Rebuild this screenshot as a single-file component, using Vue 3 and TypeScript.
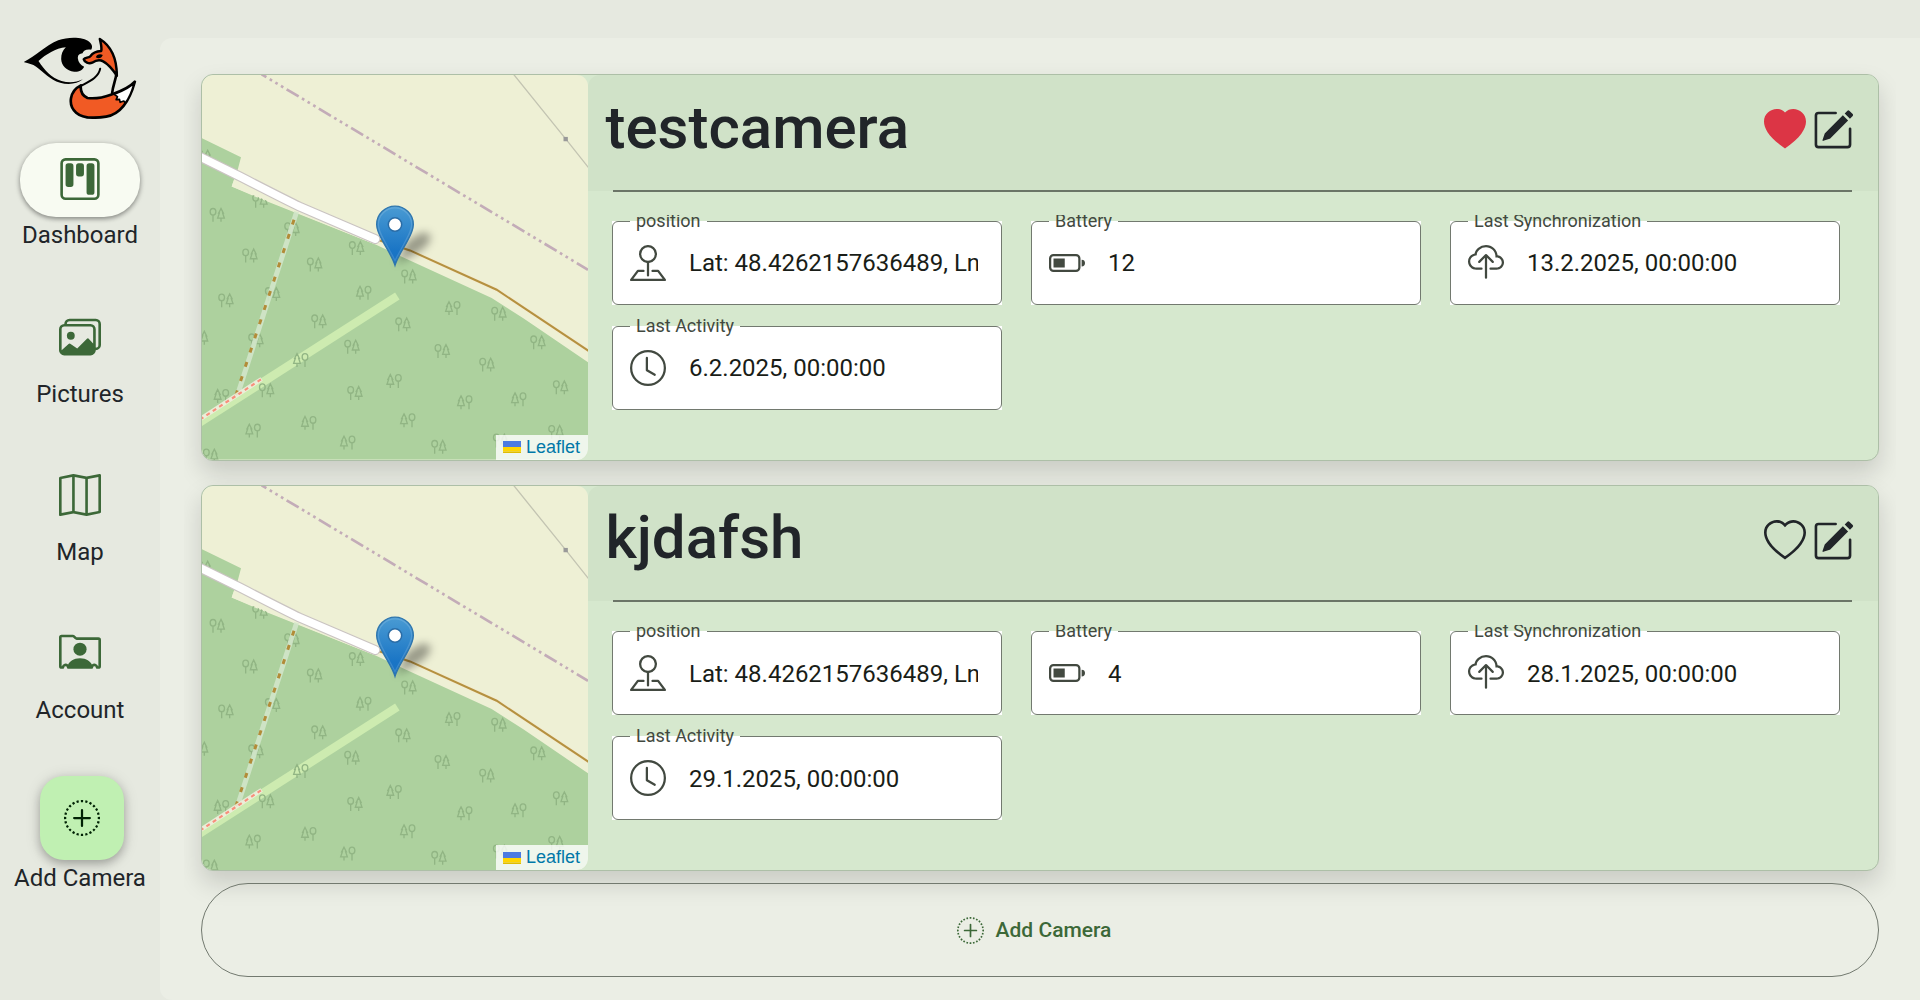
<script setup lang="ts">
interface Field {
  label: string
  icon: string
  value: string
}
interface Camera {
  name: string
  favorite: boolean
  fields: Field[]
}
interface Tree {
  x: number
  y: number
  flip?: boolean
}

const icons: Record<string, string[]> = {
  kanban: [
    'M13.5 1a1 1 0 0 1 1 1v12a1 1 0 0 1-1 1h-11a1 1 0 0 1-1-1V2a1 1 0 0 1 1-1zm-11-1a2 2 0 0 0-2 2v12a2 2 0 0 0 2 2h11a2 2 0 0 0 2-2V2a2 2 0 0 0-2-2z',
    'M6.5 3a1 1 0 0 1 1-1h1a1 1 0 0 1 1 1v3a1 1 0 0 1-1 1h-1a1 1 0 0 1-1-1zm-4 0a1 1 0 0 1 1-1h1a1 1 0 0 1 1 1v7a1 1 0 0 1-1 1h-1a1 1 0 0 1-1-1zm8 0a1 1 0 0 1 1-1h1a1 1 0 0 1 1 1v10a1 1 0 0 1-1 1h-1a1 1 0 0 1-1-1z',
  ],
  images: [
    'M4.502 9a1.5 1.5 0 1 0 0-3 1.5 1.5 0 0 0 0 3',
    'M14.002 13a2 2 0 0 1-2 2h-10a2 2 0 0 1-2-2V5A2 2 0 0 1 2 3a2 2 0 0 1 2-2h10a2 2 0 0 1 2 2v8a2 2 0 0 1-1.998 2M14 2H4a1 1 0 0 0-1 1h9.002a2 2 0 0 1 2 2v7A1 1 0 0 0 15 11V3a1 1 0 0 0-1-1M2.002 4a1 1 0 0 0-1 1v8l2.646-2.354a.5.5 0 0 1 .63-.062l2.66 1.773 3.71-3.71a.5.5 0 0 1 .577-.094l1.777 1.947V5a1 1 0 0 0-1-1z',
  ],
  map: [
    'M15.817.113A.5.5 0 0 1 16 .5v14a.5.5 0 0 1-.402.49l-5 1a.5.5 0 0 1-.196 0L5.5 15.01l-4.902.98A.5.5 0 0 1 0 15.5v-14a.5.5 0 0 1 .402-.49l5-1a.5.5 0 0 1 .196 0L10.5.99l4.902-.98a.5.5 0 0 1 .415.103M10 1.91l-4-.8v12.98l4 .8zm1 12.98 4-.8V1.11l-4 .8zm-6-.8V1.11l-4 .8v12.98z',
  ],
  rolodex: [
    'M8 9.05a2.5 2.5 0 1 0 0-5 2.5 2.5 0 0 0 0 5',
    'M1 1a1 1 0 0 0-1 1v11a1 1 0 0 0 1 1h.5a.5.5 0 0 0 .5-.5.5.5 0 0 1 1 0 .5.5 0 0 0 .5.5h9a.5.5 0 0 0 .5-.5.5.5 0 0 1 1 0 .5.5 0 0 0 .5.5h.5a1 1 0 0 0 1-1V3a1 1 0 0 0-1-1H6.707L6 1.293A1 1 0 0 0 5.293 1zm0 1h4.293L6 2.707A1 1 0 0 0 6.707 3H15v10h-.085a1.5 1.5 0 0 0-2.4-.63C11.885 11.223 10.554 10 8 10c-2.555 0-3.886 1.224-4.514 2.37a1.5 1.5 0 0 0-2.4.63H1z',
  ],
  plus: [
    'M8 0q-.264 0-.523.017l.064.998a7 7 0 0 1 .918 0l.064-.998A8 8 0 0 0 8 0M6.44.152q-.52.104-1.012.27l.321.948q.43-.147.884-.237L6.44.153zm4.132.271a8 8 0 0 0-1.011-.27l-.194.98q.453.09.884.237zm1.873.925a8 8 0 0 0-.906-.524l-.443.896q.413.205.793.459zM4.46.824q-.471.233-.905.524l.556.83a7 7 0 0 1 .793-.458zM2.725 1.985q-.394.346-.74.74l.752.66q.303-.345.648-.648zm11.29.74a8 8 0 0 0-.74-.74l-.66.752q.346.303.648.648zm1.161 1.735a8 8 0 0 0-.524-.905l-.83.556q.254.38.458.793l.896-.443zM1.348 3.555q-.292.433-.524.906l.896.443q.205-.413.459-.793zM.423 5.428a8 8 0 0 0-.27 1.011l.98.194q.09-.453.237-.884zM15.848 6.44a8 8 0 0 0-.27-1.012l-.948.321q.147.43.237.884zM.017 7.477a8 8 0 0 0 0 1.046l.998-.064a7 7 0 0 1 0-.918zM16 8a8 8 0 0 0-.017-.523l-.998.064a7 7 0 0 1 0 .918l.998.064A8 8 0 0 0 16 8M.152 9.56q.104.52.27 1.012l.948-.321a7 7 0 0 1-.237-.884l-.98.194zm15.425 1.012q.168-.493.27-1.011l-.98-.194q-.09.453-.237.884zM.824 11.54a8 8 0 0 0 .524.905l.83-.556a7 7 0 0 1-.458-.793zm13.828.905q.292-.434.524-.906l-.896-.443q-.205.413-.459.793zm-12.667.83q.346.394.74.74l.66-.752a7 7 0 0 1-.648-.648zm11.29.74q.394-.346.74-.74l-.752-.66q-.302.346-.648.648zm-1.735 1.161q.471-.233.905-.524l-.556-.83a7 7 0 0 1-.793.458zm-7.985-.524q.434.292.906.524l.443-.896a7 7 0 0 1-.793-.459zm1.873.925q.493.168 1.011.27l.194-.98a7 7 0 0 1-.884-.237zm4.132.271a8 8 0 0 0 1.012-.27l-.321-.948a7 7 0 0 1-.884.237l.194.98zm-2.083.135a8 8 0 0 0 1.046 0l-.064-.998a7 7 0 0 1-.918 0zM8.5 4.5a.5.5 0 0 0-1 0v3h-3a.5.5 0 0 0 0 1h3v3a.5.5 0 0 0 1 0v-3h3a.5.5 0 0 0 0-1h-3z',
  ],
  heart: [
    'm8 2.748-.717-.737C5.6.281 2.514.878 1.4 3.053c-.523 1.023-.641 2.5.314 4.385.92 1.815 2.834 3.989 6.286 6.357 3.452-2.368 5.365-4.542 6.286-6.357.955-1.886.838-3.362.314-4.385C13.486.878 10.4.28 8.717 2.01zM8 15C-7.333 4.868 3.279-3.04 7.824 1.143q.09.083.176.171a3 3 0 0 1 .176-.17C12.72-3.042 23.333 4.867 8 15',
  ],
  heartFill: ['M8 1.314C12.438-3.248 23.534 4.735 8 15-7.534 4.736 3.562-3.248 8 1.314'],
  edit: [
    'M15.502 1.94a.5.5 0 0 1 0 .706L14.459 3.69l-2-2L13.502.646a.5.5 0 0 1 .707 0l1.293 1.293zm-1.75 2.456-2-2L4.939 9.21a.5.5 0 0 0-.121.196l-.805 2.414a.25.25 0 0 0 .316.316l2.414-.805a.5.5 0 0 0 .196-.12l6.813-6.814z',
    'M1 13.5A1.5 1.5 0 0 0 2.5 15h11a1.5 1.5 0 0 0 1.5-1.5v-6a.5.5 0 0 0-1 0v6a.5.5 0 0 1-.5.5h-11a.5.5 0 0 1-.5-.5v-11a.5.5 0 0 1 .5-.5H9a.5.5 0 0 0 0-1H2.5A1.5 1.5 0 0 0 1 2.5z',
  ],
  pin: [
    'M3.1 11.2a.5.5 0 0 1 .4-.2H6a.5.5 0 0 1 0 1H3.75L1.5 15h13l-2.25-3H10a.5.5 0 0 1 0-1h2.5a.5.5 0 0 1 .4.2l3 4a.5.5 0 0 1-.4.8H.5a.5.5 0 0 1-.4-.8z',
    'M8 1a3 3 0 1 0 0 6 3 3 0 0 0 0-6M4 4a4 4 0 1 1 4.5 3.969V13.5a.5.5 0 0 1-1 0V7.97A4 4 0 0 1 4 3.999z',
  ],
  battery: [
    'M2 6h5v4H2z',
    'M2 4a2 2 0 0 0-2 2v4a2 2 0 0 0 2 2h10a2 2 0 0 0 2-2V6a2 2 0 0 0-2-2zm10 1a1 1 0 0 1 1 1v4a1 1 0 0 1-1 1H2a1 1 0 0 1-1-1V6a1 1 0 0 1 1-1zm4 3a1.5 1.5 0 0 1-1.5 1.5v-3A1.5 1.5 0 0 1 16 8',
  ],
  cloud: [
    'M4.406 1.342A5.53 5.53 0 0 1 8 0c2.69 0 4.923 2 5.166 4.579C14.758 4.804 16 6.137 16 7.773 16 9.569 14.502 11 12.687 11H10a.5.5 0 0 1 0-1h2.688C13.979 10 15 8.988 15 7.773c0-1.216-1.02-2.228-2.313-2.228h-.5v-.5C12.188 2.825 10.328 1 8 1a4.53 4.53 0 0 0-2.941 1.1c-.757.652-1.153 1.438-1.153 2.055v.448l-.445.049C2.064 4.805 1 5.952 1 7.318 1 8.785 2.23 10 3.781 10H6a.5.5 0 0 1 0 1H3.781C1.708 11 0 9.366 0 7.318c0-1.763 1.266-3.223 2.942-3.593.143-.863.698-1.723 1.464-2.383',
    'M7.646 4.146a.5.5 0 0 1 .708 0l3 3a.5.5 0 0 1-.708.708L8.5 5.707V14.5a.5.5 0 0 1-1 0V5.707L5.354 7.854a.5.5 0 1 1-.708-.708z',
  ],
  clock: [
    'M8 3.5a.5.5 0 0 0-1 0V9a.5.5 0 0 0 .252.434l3.5 2a.5.5 0 0 0 .496-.868L8 8.71z',
    'M8 16A8 8 0 1 0 8 0a8 8 0 0 0 0 16m7-8A7 7 0 1 1 1 8a7 7 0 0 1 14 0',
  ],
}

const nav = [
  { label: 'Dashboard', icon: 'kanban', active: true },
  { label: 'Pictures', icon: 'images', active: false },
  { label: 'Map', icon: 'map', active: false },
  { label: 'Account', icon: 'rolodex', active: false },
]

const position = 'Lat: 48.4262157636489, Lng: 9.9'

const makeFields = (battery: string, sync: string, activity: string): Field[] => [
  { label: 'position', icon: 'pin', value: position },
  { label: 'Battery', icon: 'battery', value: battery },
  { label: 'Last Synchronization', icon: 'cloud', value: sync },
  { label: 'Last Activity', icon: 'clock', value: activity },
]

const cameras: Camera[] = [
  { name: 'testcamera', favorite: true, fields: makeFields('12', '13.2.2025, 00:00:00', '6.2.2025, 00:00:00') },
  { name: 'kjdafsh', favorite: false, fields: makeFields('4', '28.1.2025, 00:00:00', '29.1.2025, 00:00:00') },
]

const trees: Tree[] = [
  { x: 42, y: 290 }, { x: 82, y: 465 }, { x: 210, y: 423 }, { x: 306, y: 508 }, { x: 180, y: 587 },
  { x: 374, y: 614 }, { x: 500, y: 565 }, { x: 657, y: 650 }, { x: 521, y: 699, flip: true },
  { x: 788, y: 745, flip: true }, { x: 927, y: 762 }, { x: 1044, y: 848 }, { x: 108, y: 722 },
  { x: 248, y: 703 }, { x: 387, y: 785 }, { x: 639, y: 794 }, { x: 198, y: 842 }, { x: 486, y: 861 },
  { x: 757, y: 874 }, { x: 891, y: 915 }, { x: 332, y: 901, flip: true }, { x: 230, y: 992 },
  { x: 94, y: 1009, flip: true }, { x: 612, y: 964, flip: true }, { x: 495, y: 1000 },
  { x: 824, y: 1028, flip: true }, { x: 986, y: 1019, flip: true }, { x: 1112, y: 983 },
  { x: 653, y: 1082, flip: true }, { x: 356, y: 1090, flip: true }, { x: 189, y: 1113, flip: true },
  { x: 473, y: 1149, flip: true }, { x: 747, y: 1162 }, { x: 1098, y: 1117 }, { x: 62, y: 1188 },
  { x: 32, y: 834 }, { x: 932, y: 1143 },
]
</script>

<template>
  <div class="shell">
    <nav class="sidebar">
      <svg class="logo" viewBox="72 52 338 246" aria-hidden="true">
        <path d="M72 126C104 111 134 79 174 62C206 50 250 52 267 66C276 74 278 82 273 90C258 88 250 92 247 101C238 102 232 106 233 116C234 128 241 136 252 141C248 151 236 157 222 156C199 154 184 138 183 118C183 104 187 92 197 83C166 86 138 104 115 124C132 150 152 174 184 184C206 190 228 189 248 179C232 193 204 196 180 189C148 180 132 158 108 141C98 134 84 131 72 128Z" fill="#000" />
        <path d="M299 58C328 76 350 112 350 168C338 150 326 134 309 125C297 118 285 123 276 129C266 134 253 127 251 119C256 112 266 116 272 108C279 97 290 95 303 94C306 84 302 72 299 58Z" fill="#f15a24" stroke="#000" stroke-width="7.500" stroke-linejoin="round" />
        <path d="M287 113C289 104 300 102 308 106C305 115 295 119 287 113Z" fill="#000" />
        <path d="M242 197C208 214 202 256 228 279C246 295 285 296 318 291C362 284 388 244 404 186C384 208 352 218 332 225C308 234 280 237 262 235C246 228 240 216 242 197Z" fill="#f15a24" stroke="#000" stroke-width="8" stroke-linejoin="round" />
        <path d="M402 190C386 208 360 217 342 224L352 231L348 240L358 239L360 248L371 244L375 250C390 232 396 212 402 190Z" fill="#fff" stroke="#000" stroke-width="5" stroke-linejoin="round" />
        <path d="M300 147C296 172 270 184 244 198" fill="none" stroke="#000" stroke-width="6" stroke-linecap="round" />
        <path d="M349 158C348 180 338 196 336 220" fill="none" stroke="#000" stroke-width="8" stroke-linecap="round" />
      </svg>

      <a v-for="item in nav" :key="item.label" class="nav-item" :class="{ active: item.active }">
        <span class="nav-pill">
          <svg class="nav-icon" viewBox="0 0 16 16"><path v-for="d in icons[item.icon]" :key="d" :d="d" /></svg>
        </span>
        <span class="nav-label">{{ item.label }}</span>
      </a>

      <div class="fab-item">
        <button class="fab" aria-label="Add Camera">
          <svg viewBox="0 0 16 16"><path v-for="d in icons.plus" :key="d" :d="d" /></svg>
        </button>
        <span class="nav-label">Add Camera</span>
      </div>
    </nav>

    <main class="panel">
      <div class="scroll">
        <article v-for="(cam, i) in cameras" :key="cam.name" class="card">
          <div class="map">
            <svg class="map-art" viewBox="36 45 1158 1155" preserveAspectRatio="none">
              <defs>
                <linearGradient :id="`pin-${i}`" x1="0" y1="0" x2="0" y2="1">
                  <stop offset="0" stop-color="#4a9bd3" />
                  <stop offset="0.75" stop-color="#1a75c5" />
                  <stop offset="1" stop-color="#1671c4" />
                </linearGradient>
                <filter :id="`soft-${i}`" x="-50%" y="-50%" width="200%" height="200%">
                  <feGaussianBlur stdDeviation="13" />
                </filter>
              </defs>
              <rect x="36" y="45" width="1158" height="1155" fill="#eef0d5" />
              <path d="M36 235L153 292L143 330L125 380L200 412L560 556L650 598L905 715L1000 776L1194 908V1200H36Z" fill="#add19e" />
              <path d="M24 1092L622 709" fill="none" stroke="#cdebb0" stroke-width="25" />
              <g fill="none" stroke="#91b584" stroke-width="4">
                <g v-for="(t, n) in trees" :key="n" :transform="`translate(${t.x} ${t.y}) scale(${t.flip ? -1 : 1} 1)`">
                  <ellipse cx="-13" cy="-9" rx="8.5" ry="10" />
                  <path d="M-13 1V21M11 10V21M11 -19L4 -5L6 -5L1 10H21L16 -5L18 -5Z" />
                </g>
              </g>
              <path d="M125 380L135 350L330 445L560 552L545 550L200 410Z" fill="#eef0d5" />
              <path d="M320 456L142 1008" fill="none" stroke="#d3e6cb" stroke-opacity="0.85" stroke-width="15" />
              <path d="M312 480L136 1012" fill="none" stroke="#b28c38" stroke-width="9" stroke-dasharray="15 30" />
              <path d="M24 1083L215 958" fill="none" stroke="#f1efdf" stroke-opacity="0.85" stroke-width="13" />
              <path d="M30 1080L215 958" fill="none" stroke="#f88f7c" stroke-width="6.5" stroke-dasharray="12 11" />
              <path d="M215 43L1194 630" fill="none" stroke="#c3acb8" stroke-width="8" stroke-dasharray="42 11.7 8 11.7 8 11.7 8 11.7" stroke-dashoffset="25.5" />
              <path d="M970 42L1127 237L1196 324" fill="none" stroke="#c3c4b2" stroke-width="4" />
              <rect x="1120.500" y="231" width="13" height="13" fill="#999" />
              <path d="M545 536L660 572L920 690L1196 874" fill="none" stroke="#f2ebcf" stroke-width="11" />
              <path d="M545 534L660 572L920 690L1196 874" fill="none" stroke="#b5913f" stroke-width="6" />
              <g fill="none" stroke-linecap="round">
                <path d="M20 286L150 350Q290 422 328 440L556 538" stroke="#cac4c2" stroke-width="30" />
                <path d="M20 286L150 350Q290 422 328 440L556 538" stroke="#fff" stroke-width="23" />
              </g>
              <path d="M620 612L650 545L690 520Q720 515 722 535Q715 560 680 580Z" fill="#000" fill-opacity="0.36" :filter="`url(#soft-${i})`" />
              <path d="M615 617C608 594 594 574 578 544C567 524 560 510 560 494A55 55 0 0 1 670 494C670 510 663 524 652 544C636 574 622 594 615 617Z" :fill="`url(#pin-${i})`" stroke="#2e75ad" stroke-width="4" />
              <path d="M615 603C606 583 597 570 583 543C571 521 565 510 565 494A50 50 0 0 1 665 494C665 510 659 521 647 543C633 570 624 583 615 603Z" fill="none" stroke="#fff" stroke-opacity="0.14" stroke-width="4" />
              <circle cx="615" cy="494" r="20" fill="#fff" stroke="#2a6ca6" stroke-width="4.5" />
            </svg>
            <div class="attribution">
              <svg viewBox="0 0 12 8"><path fill="#4C7BE1" d="M0 0h12v4H0z" /><path fill="#FFD500" d="M0 4h12v3H0z" /><path fill="#E0BC00" d="M0 7h12v1H0z" /></svg>
              <a>Leaflet</a>
            </div>
          </div>

          <div class="details">
            <header class="card-head">
              <h1>{{ cam.name }}</h1>
              <div class="actions">
                <svg v-if="cam.favorite" class="fav" viewBox="0 0 16 16"><path v-for="d in icons.heartFill" :key="d" :d="d" /></svg>
                <svg v-else viewBox="0 0 16 16"><path v-for="d in icons.heart" :key="d" :d="d" /></svg>
                <svg viewBox="0 0 16 16"><path v-for="d in icons.edit" :key="d" :d="d" /></svg>
              </div>
            </header>
            <hr />
            <div class="fields">
              <div v-for="f in cam.fields" :key="f.label" class="field">
                <div class="outline"></div>
                <span class="field-label">{{ f.label }}</span>
                <svg class="field-icon" viewBox="0 0 16 16"><path v-for="d in icons[f.icon]" :key="d" :d="d" /></svg>
                <span class="field-value">{{ f.value }}</span>
              </div>
            </div>
          </div>
        </article>

        <button class="add-camera">
          <svg viewBox="0 0 16 16"><path v-for="d in icons.plus" :key="d" :d="d" /></svg>
          <span>Add Camera</span>
        </button>
      </div>
    </main>
  </div>
</template>

<style>
body {
  margin: 0;
  overflow: hidden;
}
</style>

<style scoped>
* {
  box-sizing: border-box;
}
.shell {
  display: flex;
  height: 1000px;
  background: #e6e9e0;
  color: #212529;
  font-family: Roboto, "Liberation Sans", sans-serif;
  font-size: 24px;
}
svg {
  display: block;
  fill: currentColor;
  flex: none;
}
button {
  font: inherit;
  padding: 0;
}
.sidebar {
  width: 160px;
  flex: none;
  display: flex;
  flex-direction: column;
  align-items: center;
}
.logo {
  width: 113px;
  height: 82px;
  margin: 37.4px 0 23.6px;
}
.nav-item {
  height: 158px;
  display: flex;
  flex-direction: column;
  align-items: center;
}
.nav-pill {
  width: 120px;
  height: 74px;
  padding-bottom: 2px;
  display: flex;
  align-items: center;
  justify-content: center;
  border-radius: 36px;
  color: #3c6838;
}
.active .nav-pill {
  background: #f8fbf2;
  box-shadow: 0 2px 4px rgba(0, 0, 0, 0.3), 0 1px 6px rgba(0, 0, 0, 0.18);
}
.nav-icon {
  width: 42px;
  height: 42px;
}
.nav-label {
  line-height: 36px;
  white-space: nowrap;
}
.nav-item:not(.active) .nav-label {
  margin-top: 1px;
}
.fab-item {
  display: flex;
  flex-direction: column;
  align-items: center;
}
.fab {
  width: 84px;
  height: 84px;
  margin: 1px 0 0 4px;
  border: 0;
  border-radius: 24px;
  background: #c0f0b2;
  color: #002204;
  display: flex;
  align-items: center;
  justify-content: center;
  box-shadow: 0 4px 8px rgba(0, 0, 0, 0.22), 0 2px 16px rgba(0, 0, 0, 0.14);
}
.fab svg {
  width: 36px;
  height: 36px;
}
.panel {
  flex: 1;
  min-width: 0;
  margin-top: 38px;
  padding: 0 24px;
  background: #ebeee5;
  border-radius: 12px 0 0 12px;
}
.scroll {
  height: 962px;
  padding: 36.2px 17px 0;
  overflow: hidden;
}
.card {
  display: flex;
  height: 386.5px;
  margin-bottom: 24px;
  border: 1px solid #adbfa7;
  border-radius: 12px;
  background: #d6e8ce;
  box-shadow: 0 12px 24px rgba(0, 0, 0, 0.15);
  overflow: hidden;
}
.card:last-of-type {
  margin-bottom: 12px;
}
.map {
  position: relative;
  width: 386px;
  flex: none;
  border-radius: 11px;
  overflow: hidden;
}
.map-art {
  width: 100%;
  height: 100%;
}
.attribution {
  position: absolute;
  right: 0;
  bottom: 0;
  width: 92px;
  height: 25px;
  padding-left: 7px;
  display: flex;
  align-items: center;
  gap: 5px;
  background: rgba(255, 255, 255, 0.8);
  color: #0078a8;
  font: 18px/25px "Liberation Sans", Arial, sans-serif;
}
.attribution svg {
  width: 18px;
  height: 12px;
}
.details {
  flex: 1;
  min-width: 0;
}
.card-head {
  height: 115.5px;
  padding: 0 24px 0 17.5px;
  display: flex;
  justify-content: space-between;
  align-items: flex-start;
  background: #d0e2c8;
  border-top-left-radius: 12px;
}
h1 {
  margin: 16.5px 0 0;
  font-size: 60px;
  line-height: 72px;
  font-weight: 500;
}
.actions {
  display: flex;
  gap: 6px;
  margin-top: 34px;
}
.actions svg {
  width: 42px;
  height: 42px;
}
.fav {
  color: #dc3545;
}
hr {
  position: relative;
  height: 2px;
  margin: -1px 26px 0 25px;
  border: 0;
  background: #6b7567;
}
.fields {
  display: flex;
  flex-wrap: wrap;
  gap: 21px 29px;
  margin-top: 23px;
  padding: 6px 0 10px 24px;
  overflow: hidden;
}
.field {
  position: relative;
  width: 390px;
  height: 84px;
  padding: 0 24px 0 18px;
  display: flex;
  align-items: center;
  gap: 23px;
  background: #fff;
}
.outline {
  position: absolute;
  inset: 0;
  border: 1px solid #72796f;
  border-radius: 6px;
}
.field-label {
  position: absolute;
  left: 18px;
  top: -11px;
  padding: 0 6px;
  color: #424940;
  font-size: 18px;
  line-height: 22px;
  background: linear-gradient(#fff, #fff) 0 11px / 100% 1px no-repeat;
}
.field-icon {
  width: 36px;
  height: 36px;
  color: #424940;
}
.field-value {
  flex: 1;
  min-width: 0;
  margin-top: 1px;
  overflow: hidden;
  white-space: nowrap;
  line-height: 36px;
  color: #191d17;
}
.add-camera {
  width: 100%;
  height: 94px;
  padding-right: 12px;
  display: flex;
  align-items: center;
  justify-content: center;
  gap: 12px;
  border: 1px solid #72796f;
  border-radius: 47px;
  background: transparent;
  color: #3c6838;
  font-size: 21px;
  font-weight: 500;
}
.add-camera svg {
  width: 27px;
  height: 27px;
}
</style>
